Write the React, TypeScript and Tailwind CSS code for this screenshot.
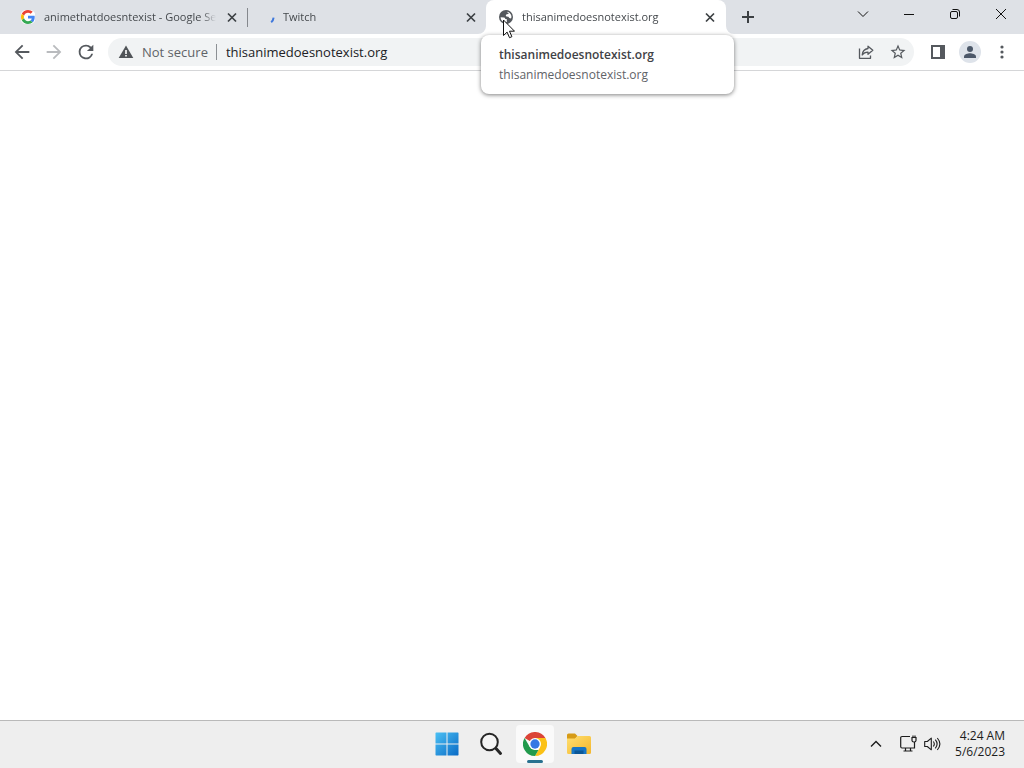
import type { ReactNode } from "react";

type TabProps = {
  title: string;
  icon: ReactNode;
  active?: boolean;
  divider?: boolean;
  children?: ReactNode;
};

function GoogleIcon() {
  return (
    <svg viewBox="0 0 48 48" className="size-3.5" aria-hidden="true">
      <circle cx="24" cy="24" r="27" fill="#fff" />
      <path fill="#EA4335" d="M24 9.5c3.54 0 6.71 1.22 9.21 3.6l6.85-6.85C35.9 2.38 30.47 0 24 0 14.62 0 6.51 5.38 2.56 13.22l7.98 6.19C12.43 13.72 17.74 9.5 24 9.5z" />
      <path fill="#4285F4" d="M46.98 24.55c0-1.57-.15-3.09-.38-4.55H24v9.02h12.94c-.58 2.96-2.26 5.48-4.78 7.18l7.73 6c4.51-4.18 7.09-10.36 7.09-17.65z" />
      <path fill="#FBBC05" d="M10.53 28.59c-.48-1.45-.76-2.99-.76-4.59s.27-3.14.76-4.59l-7.98-6.19C.92 16.46 0 20.12 0 24c0 3.88.92 7.54 2.56 10.78l7.97-6.19z" />
      <path fill="#34A853" d="M24 48c6.48 0 11.93-2.13 15.89-5.81l-7.73-6c-2.15 1.45-4.92 2.3-8.16 2.3-6.26 0-11.57-4.22-13.47-9.91l-7.98 6.19C6.51 42.62 14.62 48 24 48z" />
    </svg>
  );
}

function SpinnerIcon() {
  return (
    <svg viewBox="0 0 16 16" className="size-4" fill="none" stroke="#3f78dc" strokeWidth="2" aria-hidden="true">
      <path d="M14.6 8.6a7 7 0 0 1-2.4 4.6" />
    </svg>
  );
}

function GlobeIcon() {
  return (
    <svg viewBox="0 0 16 16" className="size-4" aria-hidden="true">
      <circle cx="8" cy="8" r="7" fill="#54585d" />
      <path fill="#fff" d="M2.6 8.2 6 8.4c1 .1 1.3.8 1.2 1.7h1.5l.2 2.9c-.3.5-1.1.5-1.8.4C4.5 13 2.6 11 2.6 8.2z" />
      <path fill="#fff" d="M9.3 2.8c2.5.6 4.2 2.7 4.2 5.2l-.5 1.6-1.7-.5-.9-1.4-2-.1-.7-1.3 1-1 1.6-.2.4-1.1-1.4-.5z" />
    </svg>
  );
}

function Tab({ title, icon, active, divider, children }: TabProps) {
  return (
    <div
      className={
        active
          ? "relative flex h-[34px] min-w-0 flex-1 max-w-60 items-center rounded-t-lg bg-white pl-3 pr-2"
          : "relative flex h-[34px] min-w-0 flex-1 max-w-[239px] items-center pl-3 pr-[7px]"
      }
    >
      {active && (
        <>
          <svg viewBox="0 0 8 8" className="absolute -left-2 bottom-0 size-2" aria-hidden="true">
            <path fill="#fff" d="M8 0v8H0a8 8 0 0 0 8-8z" />
          </svg>
          <svg viewBox="0 0 8 8" className="absolute -right-2 bottom-0 size-2" aria-hidden="true">
            <path fill="#fff" d="M0 0v8h8a8 8 0 0 1-8-8z" />
          </svg>
        </>
      )}
      <span className="flex size-4 shrink-0 items-center justify-center">{icon}</span>
      <span className="ml-2 min-w-0 flex-1 overflow-hidden whitespace-nowrap text-[11px] leading-4 text-[#45494d] mask-r-from-[92%] mask-r-to-100%">
        {title}
      </span>
      <button type="button" aria-label={`Close ${title}`} className="ml-2 flex size-4 shrink-0 items-center justify-center text-[#3c4043]">
        <svg viewBox="0 0 16 16" className="size-4" fill="none" stroke="currentColor" strokeWidth="1.7" aria-hidden="true">
          <path d="m4 4.500 8 8M12 4.500l-8 8" />
        </svg>
      </button>
      {divider && <span className="absolute -right-px top-2 h-[19px] w-px bg-[#85888d]" />}
      {children}
    </div>
  );
}

function TabHoverCard() {
  return (
    <div
      role="tooltip"
      className="absolute -left-[5px] top-[35px] z-10 w-[253px] rounded-lg bg-white px-[18px] pb-[9px] pt-2.5 text-[12px] leading-5 shadow-[0_1px_4px_rgba(0,0,0,0.5)]"
    >
      <p className="font-semibold text-[#3f4246]">thisanimedoesnotexist.org</p>
      <p className="text-[#5f6368]">thisanimedoesnotexist.org</p>
    </div>
  );
}

function WindowButton({ label, children }: { label: string; children: ReactNode }) {
  return (
    <button type="button" aria-label={label} className="flex h-7 w-[46px] items-center justify-center text-[#111]">
      <svg viewBox="0 0 12 12" className="size-3" fill="none" stroke="currentColor" strokeWidth="1" aria-hidden="true">
        {children}
      </svg>
    </button>
  );
}

function ToolButton({ label, className = "text-[#55595e]", children }: { label: string; className?: string; children: ReactNode }) {
  return (
    <button type="button" aria-label={label} className={`flex size-7 shrink-0 items-center justify-center ${className}`}>
      {children}
    </button>
  );
}

function TabStrip() {
  return (
    <header className="flex h-[34px] bg-[#dee1e6] pl-2">
      <div className="flex min-w-0 flex-1">
        <Tab title="animethatdoesntexist - Google Search" icon={<GoogleIcon />} divider />
        <Tab title="Twitch" icon={<SpinnerIcon />} />
        <Tab title="thisanimedoesnotexist.org" icon={<GlobeIcon />} active>
          <TabHoverCard />
        </Tab>
        <button type="button" aria-label="New tab" className="ml-2 mt-[3px] flex size-7 shrink-0 items-center justify-center text-[#3c4043]">
          <svg viewBox="0 0 14 14" className="size-3.5" fill="none" stroke="currentColor" strokeWidth="2" aria-hidden="true">
            <path d="M7 1v12M1 7h12" />
          </svg>
        </button>
      </div>
      <div className="flex shrink-0">
        <WindowButton label="Search tabs"><path d="m1 3.500 5 5 5-5" /></WindowButton>
        <WindowButton label="Minimize"><path d="M1 6.500h10" /></WindowButton>
        <WindowButton label="Restore">
          <rect x="1.500" y="3.500" width="7" height="7" rx="1.500" />
          <path d="M3.500 1.500H8A2.500 2.500 0 0 1 10.500 4v4.500" />
        </WindowButton>
        <WindowButton label="Close"><path d="m1 1 10 10M11 1 1 11" /></WindowButton>
      </div>
    </header>
  );
}

function Toolbar() {
  return (
    <div className="flex h-[37px] items-center gap-1 border-b border-[#d5d6d8] bg-white px-2">
      <ToolButton label="Back">
        <svg viewBox="0 0 24 24" className="size-[22px]" fill="currentColor"><path d="M20 11H7.830l5.590-5.590L12 4l-8 8 8 8 1.410-1.410L7.830 13H20v-2z" /></svg>
      </ToolButton>
      <ToolButton label="Forward" className="text-[#b9bbbe]">
        <svg viewBox="0 0 24 24" className="size-[22px]" fill="currentColor"><path d="m12 4-1.410 1.410L16.170 11H4v2h12.170l-5.580 5.590L12 20l8-8z" /></svg>
      </ToolButton>
      <ToolButton label="Reload">
        <svg viewBox="0 0 24 24" className="size-[22px]" fill="currentColor"><path d="M17.650 6.350A7.958 7.958 0 0 0 12 4a8 8 0 1 0 7.730 10h-2.080A6 6 0 1 1 12 6c1.660 0 3.140.69 4.220 1.780L13 11h7V4l-2.350 2.350z" /></svg>
      </ToolButton>
      <form className="ml-1 flex h-7 min-w-0 flex-1 items-center rounded-full bg-[#f1f3f4] pl-2.5 pr-0.5 text-[13px] leading-5" onSubmit={(e) => e.preventDefault()}>
        <svg viewBox="0 0 16 16" className="size-4 shrink-0" aria-hidden="true">
          <path fill="#505458" d="M8 1.500 15.300 14H.7z" />
          <path fill="#fff" d="M7.200 6h1.600v4H7.200zM7.200 11h1.600v1.500H7.200z" />
        </svg>
        <label htmlFor="address" className="ml-2 shrink-0 text-[#5f6368]">Not secure</label>
        <span className="ml-2 h-4 w-px shrink-0 bg-[#8c9094]" />
        <input id="address" defaultValue="thisanimedoesnotexist.org" className="ml-[9px] min-w-0 flex-1 bg-transparent text-[#202124] outline-none" />
        <div className="flex shrink-0 gap-1">
          <ToolButton label="Share this page">
            <svg viewBox="0 0 16 16" className="size-4" fill="none" stroke="currentColor" strokeWidth="1.300" strokeLinejoin="round">
              <path d="M1.500 4.500v9.800h11V11.500" />
              <path d="M10 2.200 14.800 6.300 10 10.300V8.100C7.300 8 5.600 9 4.200 11 4.500 7.600 6.500 5 10 4.500z" />
            </svg>
          </ToolButton>
          <ToolButton label="Bookmark this tab">
            <svg viewBox="0 0 24 24" className="size-[18px]" fill="currentColor"><path d="m22 9.240-7.190-.62L12 2 9.190 8.630 2 9.240l5.460 4.730L5.820 21 12 17.270 18.180 21l-1.630-7.030L22 9.240zM12 15.400l-3.760 2.270 1-4.280-3.320-2.880 4.380-.38L12 6.100l1.710 4.040 4.380.38-3.320 2.880 1 4.280L12 15.400z" /></svg>
          </ToolButton>
        </div>
      </form>
      <div className="ml-1.5 flex gap-1">
        <ToolButton label="Side panel">
          <svg viewBox="0 0 14 14" className="size-3.5" fill="currentColor"><path fillRule="evenodd" d="M0 0h14v14H0zM2 2v10h7V2z" /></svg>
        </ToolButton>
        <ToolButton label="Profile" className="text-[#53627a]">
          <svg viewBox="0 0 22 22" className="size-[22px]"><circle cx="11" cy="11" r="11" fill="#dee3ea" /><circle cx="11" cy="8" r="3" fill="#4c5869" /><path fill="#4c5869" d="M5 17v-1.500c0-2.200 4-3.300 6-3.300s6 1.100 6 3.300V17z" /></svg>
        </ToolButton>
        <ToolButton label="Menu">
          <svg viewBox="0 0 4 14" className="h-3.5 w-1" fill="currentColor"><circle cx="2" cy="2" r="1.600" /><circle cx="2" cy="7" r="1.600" /><circle cx="2" cy="12" r="1.600" /></svg>
        </ToolButton>
      </div>
    </div>
  );
}

function Taskbar() {
  return (
    <footer className="grid h-12 grid-cols-[1fr_auto_1fr] items-center border-t border-[#b9b9b9] bg-[#eeeeee] pb-0.5 pl-0.5">
      <nav aria-label="Pinned apps" className="col-start-2 flex gap-1.5">
        <button type="button" aria-label="Start" className="flex size-[38px] items-center justify-center">
          <svg viewBox="0 0 24 24" className="size-6">
            <defs>
              <linearGradient id="start-fill" gradientUnits="userSpaceOnUse" x1="0" y1="0" x2="24" y2="24">
                <stop offset="0" stopColor="#4cc2f5" /><stop offset="1" stopColor="#0868c4" />
              </linearGradient>
            </defs>
            <path fill="url(#start-fill)" d="M1 .5h10.500v11H.5V1zM12.500.5H23l.5.5v10.500h-11zM.5 12.500h11v11H1l-.5-.5zM12.500 12.500h11V23l-.5.5H12.500z" />
          </svg>
        </button>
        <button type="button" aria-label="Search" className="flex size-[38px] items-center justify-center">
          <svg viewBox="0 0 24 24" className="size-6" fill="none" stroke="#252525" aria-hidden="true">
            <circle cx="10.500" cy="10" r="8.300" strokeWidth="2" fill="#f4f4f4" />
            <path d="m17 16.500 4.500 5" strokeWidth="3" strokeLinecap="round" />
          </svg>
        </button>
        <button type="button" aria-label="Google Chrome" className="relative flex size-[38px] items-center justify-center rounded bg-[#fafafa]">
          <svg viewBox="0 0 48 48" className="size-6" aria-hidden="true">
            <path fill="#db4437" d="M24 24 3.200 12A24 24 0 0 1 44.800 12L44.800 13H24z" />
            <path fill="#fbc116" d="M24 12h20.800A24 24 0 0 1 24 48L34.400 30z" />
            <path fill="#229a4c" d="M3.200 12 13.600 30 24 36h6.900L24 48A24 24 0 0 1 3.200 12z" />
            <circle cx="24" cy="24" r="12" fill="#fff" />
            <circle cx="24" cy="24" r="9.300" fill="#3678e4" />
          </svg>
          <span className="absolute bottom-0 left-[11px] h-[3px] w-4 rounded-full bg-[#28718f]" />
        </button>
        <button type="button" aria-label="File Explorer" className="flex size-[38px] items-center justify-center">
          <svg viewBox="0 0 24 24" className="size-6" aria-hidden="true">
            <defs>
              <linearGradient id="folder-fill" x1="0" y1="0" x2="1" y2="1">
                <stop offset="0" stopColor="#ffdf70" /><stop offset="1" stopColor="#f3b62c" />
              </linearGradient>
            </defs>
            <path fill="#d69b17" d="M0 3q0-1.500 1.500-1.500H8L10.500 4 8 7H0z" />
            <path fill="url(#folder-fill)" d="M0 6.500h8L10.500 4H22.500Q24 4 24 5.500v15q0 1.500-1.500 1.500h-21Q0 22 0 20.500z" />
            <path fill="#1675c5" d="M4.500 22v-5q0-2 2-2h11q2 0 2 2v5z" />
            <path fill="#0b5797" d="M7.500 18.500h9V22h-9z" />
          </svg>
        </button>
      </nav>
      <div className="flex items-center justify-end pr-[19px] text-[#1c1c1c]">
        <button type="button" aria-label="Show hidden icons" className="mr-4 flex h-8 w-4 items-center justify-center">
          <svg viewBox="0 0 12 8" className="h-2 w-3" fill="none" stroke="currentColor" strokeWidth="1.400"><path d="m1 6.500 5-5 5 5" /></svg>
        </button>
        <button type="button" aria-label="Network and volume" className="mr-3.5 flex h-8 items-center gap-[7px]">
          <svg viewBox="0 0 17 17" className="size-[17px]" fill="none" stroke="currentColor" strokeWidth="1.200">
            <path d="M10 1.500H2A1.300 1.300 0 0 0 .7 2.800v9A1.300 1.300 0 0 0 2 13h12.500V7M5.500 13v3M10.500 13v3M3.500 16h9" />
            <path d="M12 2.500h4v3q0 1.500-2 1.500t-2-1.500zM13 .5v2M15 .5v2" />
          </svg>
          <svg viewBox="0 0 17 16" className="h-4 w-[17px]" fill="none" stroke="currentColor" strokeWidth="1.100" strokeLinejoin="round">
            <path d="M.7 5.500h2.600l4-3.300v11.600l-4-3.300H.7zM9.300 5.500q2 2.500 0 5M11.300 3.700q3.600 4.300 0 8.600M13.300 2q5.200 6 0 12" />
          </svg>
        </button>
        <time dateTime="2023-05-06T04:24" className="text-right text-[12px] leading-4">
          <span className="block">4:24 AM</span>
          <span className="block">5/6/2023</span>
        </time>
      </div>
    </footer>
  );
}

function Pointer() {
  return (
    <svg viewBox="0 0 12 20" className="pointer-events-none absolute left-[503px] top-[19px] z-20 h-5 w-3" aria-hidden="true">
      <path fill="#fff" stroke="#111" d="M.5 1v15.500l3.600-3.400 2.400 5.600 2.400-1-2.400-5.500h5z" />
    </svg>
  );
}

export default function App() {
  return (
    <div className="relative flex min-h-screen flex-col bg-white font-['Open_Sans','Noto_Sans',sans-serif]">
      <TabStrip />
      <Toolbar />
      <main className="flex-1 bg-white" />
      <Taskbar />
      <Pointer />
    </div>
  );
}
